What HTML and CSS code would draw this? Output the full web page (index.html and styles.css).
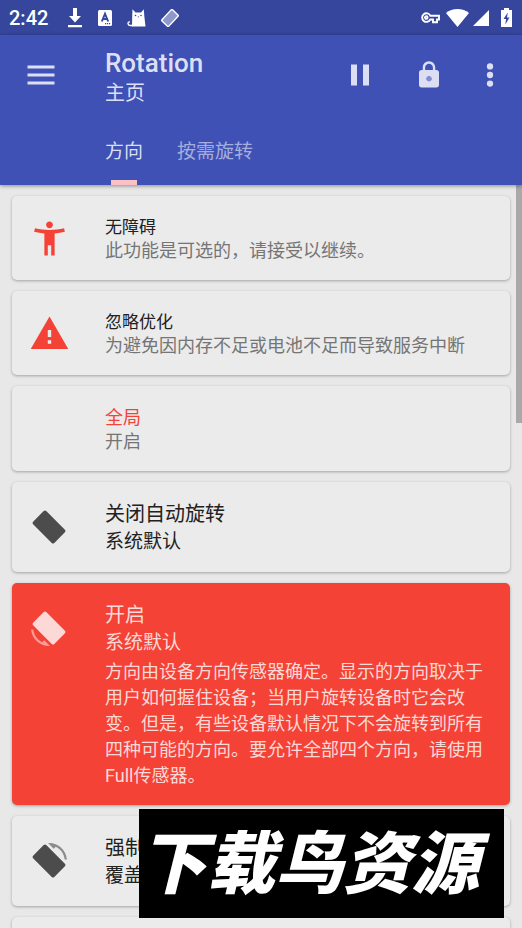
FILE: index.html
```html
<!DOCTYPE html>
<html lang="zh-CN">
<head>
<meta charset="utf-8">
<meta name="viewport" content="width=device-width, initial-scale=1">
<title>Rotation</title>
<link rel="stylesheet" href="styles.css">
</head>
<body>
<div class="app">
  <div class="status-bar">
    <span class="clock">2:42</span>
    <div class="status-left">
      <svg width="16" height="20" viewBox="0 0 16 20" fill="currentColor"><path d="M6 0h4v8h4l-6 6.500L2 8h4zM1 17h14v2.200H1z"/></svg>
      <svg width="14" height="16" viewBox="0 0 14 16"><rect width="14" height="16" rx="1.500" fill="currentColor"/><path d="M3.800 11.500 7 3.800l3.200 7.700M4.900 9h4.200" fill="none" stroke="#35469c" stroke-width="1.900"/><path d="M7 13h1.200v1.200H7zM9 13h1.200v1.200H9zM11 13h1.200v1.200H11z" fill="#35469c"/></svg>
      <svg width="19" height="18" viewBox="0 0 19 18"><path d="M5.500.300 8.500 3.500h5.500L16.800.300 17.300 7l1.200 10.500H5L5.200 7z" fill="currentColor"/><path d="M6 16.500H3.500C.300 16.500.200 12.500 3 12.800" fill="none" stroke="currentColor" stroke-width="1.300"/><g fill="#35469c"><circle cx="8.500" cy="6.500" r=".8"/><circle cx="14" cy="6.500" r=".8"/><circle cx="11.300" cy="7.800" r=".6"/></g></svg>
      <svg width="18" height="18" viewBox="0 0 18 18"><rect x="1.300" y="4.300" width="15.400" height="9.400" rx="1" transform="rotate(-47 9 9)" fill="#8e98cb" stroke="currentColor" stroke-width="1.400"/></svg>
    </div>
    <div class="status-right">
      <svg class="key" width="19" height="12" viewBox="0 0 19 12" fill="none" stroke="currentColor" stroke-width="1.900"><path d="M9.300 3.700H18v3.800h-2v2.800h-4V7.500H9.300A4.300 4.300 0 1 1 9.300 3.700z"/><circle cx="5.300" cy="5.600" r="1.300"/></svg>
      <svg class="wifi" width="23" height="18" viewBox="0 0 23 18" fill="currentColor"><path d="M11.500 18 0 4C6-1.300 17-1.300 23 4z"/></svg>
      <svg class="signal" width="16" height="16" viewBox="0 0 16 16" fill="currentColor"><path d="M16 0v16H0z"/></svg>
      <svg class="battery" width="11" height="19" viewBox="0 0 11 19"><path d="M3 0h5v2h3v17H0V2h3z" fill="currentColor"/><path d="M6.800 4.500 2.500 11h2.600l-.8 5.500L8.500 9.500H6z" fill="#35469c"/></svg>
    </div>
  </div>

  <header class="app-bar">
    <div class="toolbar">
      <button class="icon-button menu" aria-label="菜单"><svg width="36" height="36" viewBox="0 0 24 24" fill="currentColor"><path d="M3 18.300h18v-2H3zM3 13h18v-2H3zM3 7.700h18v-2H3z"/></svg></button>
      <div class="heading">
        <h1>Rotation</h1>
        <p>主页</p>
      </div>
      <div class="actions">
        <button class="icon-button" aria-label="暂停"><svg width="36" height="36" viewBox="0 0 24 24" fill="currentColor"><path d="M6 19h4V5H6zM14 5v14h4V5z"/></svg></button>
        <button class="icon-button" aria-label="锁定"><svg width="30" height="30" viewBox="0 0 24 24" fill="currentColor"><path fill-rule="evenodd" d="M18 8h-1V6c0-2.760-2.240-5-5-5S7 3.240 7 6v2H6c-1.100 0-2 .9-2 2v10c0 1.100.9 2 2 2h12c1.100 0 2-.9 2-2V10c0-1.100-.9-2-2-2zm-6 9c-1.100 0-2-.9-2-2s.9-2 2-2 2 .9 2 2-.9 2-2 2zm3.100-9H8.900V6c0-1.710 1.390-3.100 3.100-3.100s3.100 1.390 3.100 3.100z"/><circle cx="12" cy="15" r="2" fill="#858fce"/></svg></button>
        <button class="icon-button more" aria-label="更多选项"><svg width="36" height="36" viewBox="0 0 24 24" fill="currentColor"><circle cx="12" cy="6.300" r="2.100"/><circle cx="12" cy="12" r="2.100"/><circle cx="12" cy="17.700" r="2.100"/></svg></button>
      </div>
    </div>
    <nav class="tabs">
      <a class="tab active" href="#orientation">方向</a>
      <a class="tab" href="#on-demand">按需旋转</a>
    </nav>
  </header>

  <main class="content" id="orientation">
    <section class="card notice">
      <div class="card-icon red"><svg width="41" height="41" viewBox="0 0 24 24" fill="currentColor"><path d="M20.500 6c-2.610.7-5.670 1-8.500 1s-5.890-.3-8.500-1L3 8c1.860.5 4 .83 6 1v13h2v-6h2v6h2V9c2-.17 4.140-.5 6-1zM12 6c1.100 0 2-.9 2-2s-.9-2-2-2-2 .9-2 2 .9 2 2 2z"/></svg></div>
      <div class="card-text">
        <h2>无障碍</h2>
        <p class="muted">此功能是可选的，请接受以继续。</p>
      </div>
    </section>

    <section class="card notice">
      <div class="card-icon red"><svg width="41" height="41" viewBox="0 0 24 24" fill="currentColor"><path d="M1 21h22L12 2zm12-3h-2v-2h2zm0-4h-2v-4h2z"/></svg></div>
      <div class="card-text">
        <h2>忽略优化</h2>
        <p class="muted">为避免因内存不足或电池不足而导致服务中断</p>
      </div>
    </section>

    <section class="card global">
      <div class="card-icon"></div>
      <div class="card-text">
        <h2>全局</h2>
        <p class="muted">开启</p>
      </div>
    </section>

    <section class="card mode">
      <div class="card-icon"><svg width="36" height="36" viewBox="0 0 24 24" fill="currentColor"><rect x="2" y="5.800" width="20" height="12.400" rx="1.200" transform="rotate(45 12 12)"/></svg></div>
      <div class="card-text">
        <h2>关闭自动旋转</h2>
        <p>系统默认</p>
      </div>
    </section>

    <section class="card mode selected">
      <div class="card-icon"><svg width="36" height="36" viewBox="0 0 24 24" fill="currentColor"><rect x="2" y="5.800" width="20" height="12.400" rx="1.200" transform="rotate(45 12 12)"/><path opacity=".6" d="M7.520 21.480C4.250 19.940 1.910 16.760 1.550 13H.05C.56 19.160 5.710 24 12 24l.66-.03-3.810-3.810z"/></svg></div>
      <div class="card-text">
        <h2>开启</h2>
        <p>系统默认</p>
        <p class="description">方向由设备方向传感器确定。显示的方向取决于用户如何握住设备；当用户旋转设备时它会改变。但是，有些设备默认情况下不会旋转到所有四种可能的方向。要允许全部四个方向，请使用Full传感器。</p>
      </div>
    </section>

    <section class="card mode">
      <div class="card-icon"><svg width="36" height="36" viewBox="0 0 24 24" fill="currentColor"><rect x="2" y="5.800" width="20" height="12.400" rx="1.200" transform="rotate(45 12 12)"/><path opacity=".6" d="M16.480 2.520c3.270 1.550 5.610 4.720 5.970 8.480h1.500C23.440 4.840 18.290 0 12 0l-.66.03 3.810 3.810z"/></svg></div>
      <div class="card-text">
        <h2>强制</h2>
        <p>覆盖</p>
      </div>
    </section>

    <section class="card mode"></section>
    <div class="scroll-thumb"></div>
  </main>

  <div class="watermark">下载鸟资源</div>
</div>
</body>
</html>
```
FILE: styles.css
```css
* {
  box-sizing: border-box;
}

body {
  margin: 0;
  background: #e8e8e8;
  color: #212121;
  font-family: Roboto, "Noto Sans CJK SC", sans-serif;
}

h1, h2, p {
  margin: 0;
  font-weight: 400;
}

svg {
  display: block;
  flex: none;
}

.app {
  position: relative;
  display: flex;
  flex-direction: column;
  height: 100vh;
  overflow: hidden;
}

/* System status bar */
.status-bar {
  display: flex;
  align-items: center;
  flex: none;
  height: 35px;
  padding: 0 10px 0 9px;
  background: #35469c;
  color: #fff;
}

.clock {
  font-size: 20px;
  font-weight: 500;
  line-height: 36px;
}

.status-left {
  display: flex;
  align-items: center;
  gap: 15px;
  margin-left: 19px;
}

.status-right {
  display: flex;
  align-items: center;
  gap: 4px;
  margin-left: auto;
}

.wifi {
  margin-left: 2px;
}

.battery {
  margin-left: 8px;
}

/* App bar */
.app-bar {
  position: relative;
  z-index: 1;
  flex: none;
  background: #3f51b5;
  color: #dcdff3;
  box-shadow: 0 1px 4px rgba(0, 0, 0, 0.4);
}

.toolbar {
  display: flex;
  align-items: center;
  height: 80px;
  padding-left: 17px;
}

.icon-button {
  display: flex;
  align-items: center;
  justify-content: center;
  width: 48px;
  height: 48px;
  padding: 0;
  border: 0;
  background: none;
  color: inherit;
}

.heading {
  flex: 1;
  margin-left: 40px;
  padding-top: 6px;
}

.heading h1 {
  font-size: 26px;
  font-weight: 500;
  line-height: 30px;
}

.heading p {
  font-size: 20px;
  line-height: 30px;
}

.actions {
  display: flex;
  gap: 21px;
}

.more {
  width: 64px;
  margin-left: -16px;
}

.tabs {
  display: flex;
  gap: 34px;
  padding-left: 105px;
}

.tab {
  display: flex;
  flex-direction: column;
  align-items: center;
  height: 70px;
  padding-top: 23px;
  color: #a5aedc;
  font-size: 19px;
  line-height: 28px;
  text-decoration: none;
}

.tab.active {
  color: #dcdff3;
}

.tab.active::after {
  content: "";
  width: 26px;
  height: 5px;
  margin-top: auto;
  background: #fbc2c6;
}

/* Card list */
.content {
  position: relative;
  display: flex;
  flex: 1;
  flex-direction: column;
  gap: 11px;
  min-height: 0;
  overflow: hidden;
  padding: 11px 12px 0;
}

.card {
  display: flex;
  flex: none;
  padding: 19px 18px 17px 0;
  border-radius: 5px;
  background: #ebebeb;
  box-shadow: 0 1px 3px rgba(0, 0, 0, 0.3);
}

.card-icon {
  display: flex;
  align-items: center;
  justify-content: center;
  flex: none;
  width: 74px;
  height: 46px;
  margin-right: 19px;
  color: #4c4c4c;
}

.card-icon.red {
  color: #f44336;
}

.card-text {
  flex: 1;
  font-size: 18px;
  line-height: 24px;
}

.notice h2 {
  font-size: 17px;
}

.muted {
  color: #757575;
}

.global h2 {
  color: #f44336;
  font-size: 18px;
  line-height: 25px;
}

.mode {
  min-height: 90px;
}

.mode .card-icon {
  height: 52px;
}

.mode h2 {
  font-size: 20px;
  line-height: 27px;
}

.mode p {
  font-size: 19px;
  line-height: 27px;
}

.selected {
  padding-bottom: 16px;
  background: #f44336;
  color: #fcd9d7;
}

.selected .card-icon {
  color: #fcd9d7;
}

.selected .description {
  margin-top: 3px;
  font-size: 18px;
  line-height: 26px;
}

.scroll-thumb {
  position: absolute;
  top: 0;
  right: 0;
  width: 6px;
  height: 32%;
  background: #a9a9a9;
}

/* Site stamp laid over the list */
.watermark {
  position: absolute;
  right: 18px;
  bottom: 10px;
  z-index: 2;
  padding: 0 25px 10px 0;
  background: #000;
  color: #fff;
  font-family: "Noto Sans CJK SC", sans-serif;
  font-size: 68px;
  font-style: italic;
  font-weight: 900;
  line-height: 99px;
  white-space: nowrap;
}
```
